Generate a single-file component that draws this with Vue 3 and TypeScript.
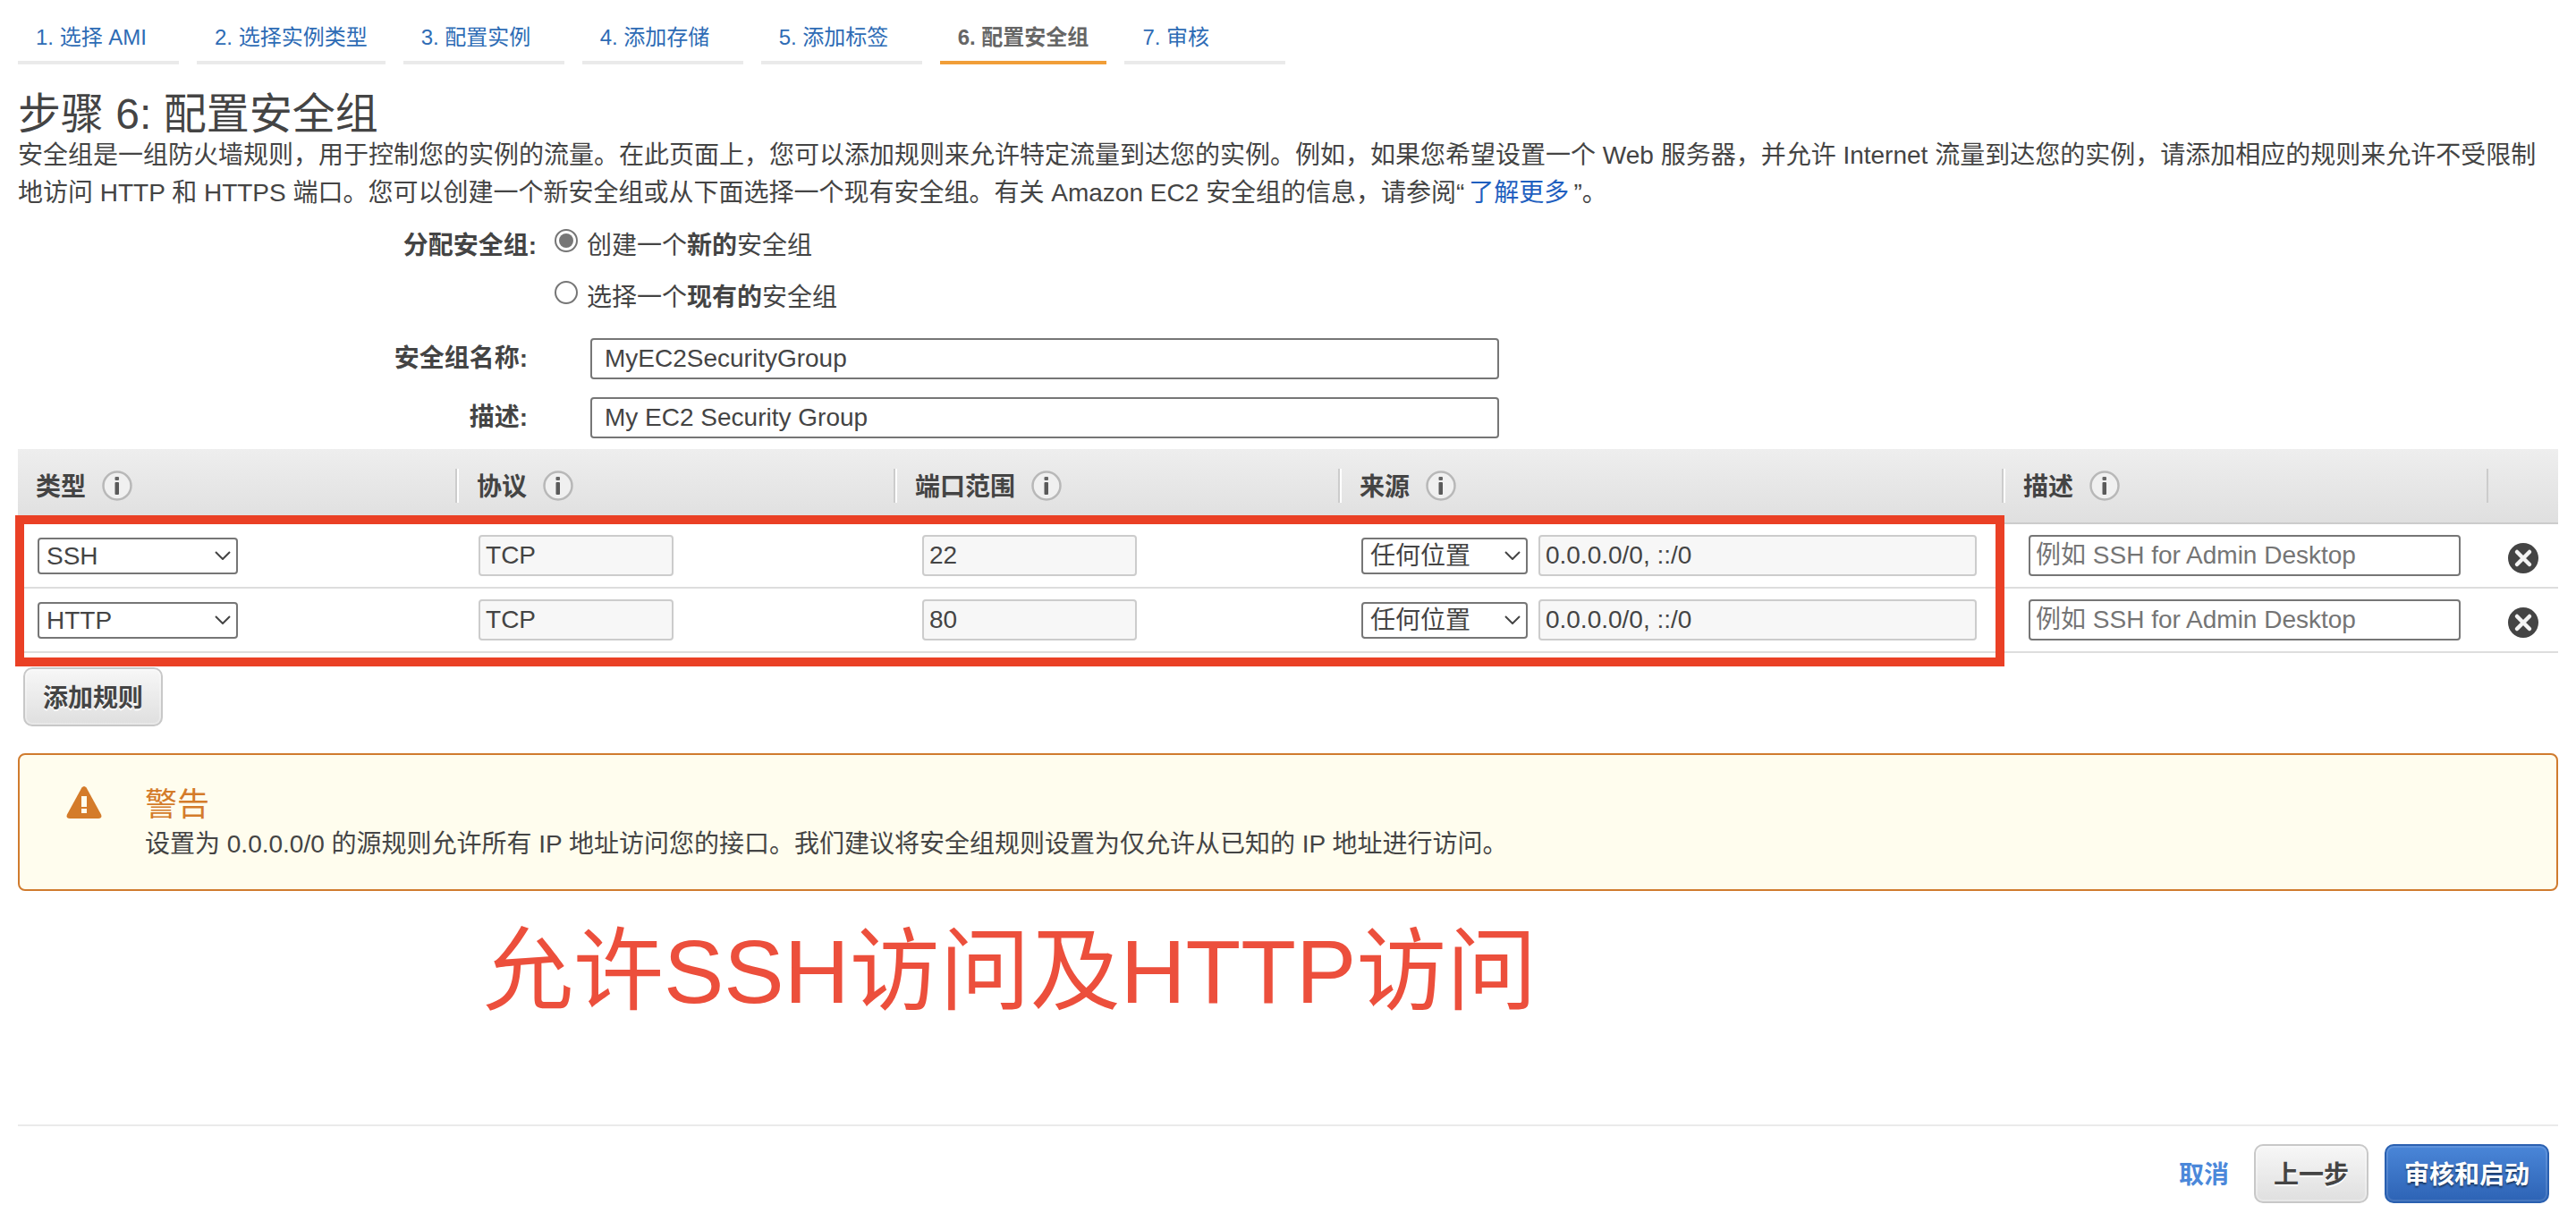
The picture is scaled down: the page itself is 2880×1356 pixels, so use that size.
<script setup lang="ts">
import { ref } from 'vue'

interface Step {
  label: string
  active?: boolean
}

interface Rule {
  type: string
  protocol: string
  port: string
  source: string
  cidr: string
  description: string
}

const steps: Step[] = [
  { label: '1. 选择 AMI' },
  { label: '2. 选择实例类型' },
  { label: '3. 配置实例' },
  { label: '4. 添加存储' },
  { label: '5. 添加标签' },
  { label: '6. 配置安全组', active: true },
  { label: '7. 审核' },
]

const columns: string[] = ['类型', '协议', '端口范围', '来源', '描述', '']

const assignMode = ref<'new' | 'existing'>('new')
const groupName = ref('MyEC2SecurityGroup')
const groupDescription = ref('My EC2 Security Group')

const rules = ref<Rule[]>([
  { type: 'SSH', protocol: 'TCP', port: '22', source: '任何位置', cidr: '0.0.0.0/0, ::/0', description: '' },
  { type: 'HTTP', protocol: 'TCP', port: '80', source: '任何位置', cidr: '0.0.0.0/0, ::/0', description: '' },
])

function addRule(): void {
  rules.value.push({
    type: 'SSH',
    protocol: 'TCP',
    port: '22',
    source: '任何位置',
    cidr: '0.0.0.0/0, ::/0',
    description: '',
  })
}

function removeRule(index: number): void {
  rules.value.splice(index, 1)
}
</script>

<template>
  <main class="page">
    <nav class="steps">
      <a
        v-for="step in steps"
        :key="step.label"
        href="#"
        class="step"
        :class="{ active: step.active }"
      >{{ step.label }}</a>
    </nav>

    <h1>步骤 6: 配置安全组</h1>
    <p class="intro">
      安全组是一组防火墙规则，用于控制您的实例的流量。在此页面上，您可以添加规则来允许特定流量到达您的实例。例如，如果您希望设置一个 Web 服务器，并允许 Internet 流量到达您的实例，请添加相应的规则来允许不受限制地访问 HTTP 和 HTTPS 端口。您可以创建一个新安全组或从下面选择一个现有安全组。有关 Amazon EC2 安全组的信息，请参阅“<a href="#">了解更多</a>”。
    </p>

    <div class="assign" role="radiogroup" aria-labelledby="assign-label">
      <span id="assign-label" class="assign-label">分配安全组:</span>
      <div class="choices">
        <label class="choice">
          <input v-model="assignMode" type="radio" name="assign" value="new" />
          <span>创建一个<b>新的</b>安全组</span>
        </label>
        <label class="choice">
          <input v-model="assignMode" type="radio" name="assign" value="existing" />
          <span>选择一个<b>现有的</b>安全组</span>
        </label>
      </div>
    </div>

    <div class="fields">
      <label for="group-name">安全组名称:</label>
      <input id="group-name" v-model="groupName" class="box roomy" type="text" />
      <label for="group-desc">描述:</label>
      <input id="group-desc" v-model="groupDescription" class="box roomy" type="text" />
    </div>

    <div class="rules">
      <table>
        <colgroup>
          <col class="c-type" />
          <col class="c-protocol" />
          <col class="c-port" />
          <col class="c-source" />
          <col class="c-desc" />
          <col />
        </colgroup>
        <thead>
          <tr>
            <th v-for="column in columns" :key="column" scope="col">
              <div class="head">
                {{ column }}
                <svg v-if="column" class="info" viewBox="0 0 34 34" aria-hidden="true">
                  <circle cx="17" cy="17" r="15.5" fill="#f0f0f0" stroke="#b8b8b8" stroke-width="2.5" />
                  <rect x="14.5" y="7" width="4.500" height="4" rx="1" fill="#666" />
                  <rect x="14.5" y="13" width="4.500" height="14" rx="1" fill="#5a5a5a" />
                </svg>
              </div>
            </th>
          </tr>
        </thead>
        <tbody>
          <tr v-for="(rule, index) in rules" :key="index">
            <td class="t-type">
              <span class="picker">
                <select v-model="rule.type" aria-label="类型">
                  <option>SSH</option>
                  <option>HTTP</option>
                </select>
                <svg viewBox="0 0 18 10" aria-hidden="true"><path d="M1 1l8 8 8-8" /></svg>
              </span>
            </td>
            <td class="t-protocol">
              <input class="box" type="text" :value="rule.protocol" disabled aria-label="协议" />
            </td>
            <td class="t-port">
              <input class="box" type="text" :value="rule.port" disabled aria-label="端口范围" />
            </td>
            <td class="t-source">
              <div class="source">
                <span class="picker">
                  <select v-model="rule.source" aria-label="来源">
                    <option>任何位置</option>
                    <option>自定义</option>
                  </select>
                  <svg viewBox="0 0 18 10" aria-hidden="true"><path d="M1 1l8 8 8-8" /></svg>
                </span>
                <input class="box" type="text" :value="rule.cidr" disabled aria-label="来源地址" />
              </div>
            </td>
            <td class="t-desc">
              <input
                v-model="rule.description"
                class="box"
                type="text"
                placeholder="例如 SSH for Admin Desktop"
                aria-label="描述"
              />
            </td>
            <td class="t-remove">
              <button class="remove" type="button" aria-label="删除规则" @click="removeRule(index)">
                <svg viewBox="0 0 34 34" aria-hidden="true">
                  <circle cx="17" cy="17" r="17" fill="#444" />
                  <path d="M10 10l14 14M24 10L10 24" fill="none" stroke="#f4f4f4" stroke-width="4.500" stroke-linecap="round" />
                </svg>
              </button>
            </td>
          </tr>
        </tbody>
      </table>
      <div class="marker" aria-hidden="true"></div>
    </div>

    <button class="btn add" type="button" @click="addRule">添加规则</button>

    <section class="warning">
      <svg viewBox="0 0 40 36" aria-hidden="true">
        <path d="M17.4 1.6Q20-1.6 22.6 1.6L39 31.5Q40.600 36 36 36H4Q-.6 36 1 31.500Z" fill="#d47b2a" />
        <rect x="17" y="11" width="6" height="12" fill="#fffdee" />
        <rect x="17" y="25" width="6" height="5" fill="#fffdee" />
      </svg>
      <div>
        <h2>警告</h2>
        <p>设置为 0.0.0.0/0 的源规则允许所有 IP 地址访问您的接口。我们建议将安全组规则设置为仅允许从已知的 IP 地址进行访问。</p>
      </div>
    </section>

    <p class="note">允许SSH访问及HTTP访问</p>

    <footer>
      <a href="#" class="cancel">取消</a>
      <button class="btn" type="button">上一步</button>
      <button class="btn primary" type="button">审核和启动</button>
    </footer>
  </main>
</template>

<style>
body {
  margin: 0;
  background: #fff;
}
</style>

<style scoped>
* {
  box-sizing: border-box;
}

.page {
  display: flex;
  flex-direction: column;
  min-height: 100vh;
  padding: 0 20px;
  color: #444;
  font-family: "Liberation Sans", "Noto Sans CJK SC", sans-serif;
  font-size: 28px;
  line-height: 42px;
}

input,
select,
button {
  margin: 0;
  color: inherit;
  font: inherit;
}

a {
  color: #1f5fbf;
  text-decoration: none;
}

.steps {
  display: flex;
  gap: 20px;
  font-size: 24px;
  line-height: 28px;
}

.step {
  min-width: 180px;
  padding: 28px 20px 12px;
  border-bottom: 4px solid #eaeaea;
  color: #2e6cb5;
  white-space: nowrap;
}

.step.active {
  border-bottom-color: #f19e38;
  color: #666;
  font-weight: bold;
}

h1 {
  margin: 31px 0 0;
  font-size: 48px;
  font-weight: normal;
  line-height: 50px;
}

.intro {
  margin: 0;
}

.intro a {
  padding: 0 5px;
}

.assign {
  display: flex;
  gap: 20px;
  margin-top: 9px;
  line-height: 58px;
}

.assign-label {
  width: 580px;
  font-weight: bold;
  text-align: right;
}

.choice {
  display: flex;
  align-items: center;
  gap: 10px;
}

.choice input {
  width: 26px;
  height: 26px;
  margin-bottom: 12px;
  padding: 3px;
  border: 2px solid #767676;
  border-radius: 50%;
  background: #fff;
  appearance: none;
}

.choice input:checked {
  background: #767676 content-box;
}

.fields {
  display: grid;
  grid-template-columns: 570px minmax(0, 1016px);
  gap: 20px 70px;
  margin-top: 16px;
}

.fields label {
  padding-top: 2px;
  font-weight: bold;
  text-align: right;
}

.box {
  display: block;
  width: 100%;
  height: 46px;
  padding: 0 6px;
  border: 2px solid #767676;
  border-radius: 4px;
  background: #fff;
}

.box.roomy {
  padding: 0 14px;
}

.box:disabled {
  border-color: #ccc;
  background: #f7f7f7;
}

.box::placeholder {
  color: #757575;
  opacity: 1;
}

.rules {
  position: relative;
  margin-top: 12px;
}

table {
  width: 100%;
  border-spacing: 0;
  table-layout: fixed;
}

.c-type {
  width: 17.22%;
}

.c-protocol {
  width: 17.25%;
}

.c-port {
  width: 17.5%;
}

.c-source {
  width: 26.13%;
}

.c-desc {
  width: 19.08%;
}

thead tr {
  background: linear-gradient(#eee, #dfdfdf);
}

th {
  height: 84px;
  padding: 0;
  border-bottom: 2px solid #ccc;
  text-align: left;
}

.head {
  display: flex;
  align-items: center;
  gap: 18px;
  height: 38px;
  padding: 4px 0 0 22px;
  border-left: 2px solid #ccc;
  box-shadow: inset 2px 0 #fff;
}

th:first-child .head {
  padding-left: 20px;
  border-left: 0;
  box-shadow: none;
}

th:last-child .head {
  box-shadow: none;
}

.info {
  flex: none;
  width: 34px;
  height: 34px;
  margin-bottom: 4px;
}

td {
  height: 72px;
  padding: 0;
  border-bottom: 2px solid #ddd;
}

.t-type {
  padding-left: 22px;
}

.t-type .picker {
  width: 224px;
}

.t-protocol {
  padding-left: 26px;
}

.t-protocol .box {
  width: 218px;
}

.t-port {
  padding-left: 32px;
}

.t-port .box {
  width: 240px;
}

.t-source {
  padding: 0 28px 0 26px;
}

.t-source .picker {
  width: 186px;
  flex: none;
}

.t-desc {
  padding: 0 29px 0 30px;
}

.t-remove {
  padding-left: 24px;
}

.source {
  display: flex;
  align-items: center;
  gap: 12px;
}

.picker {
  display: grid;
  align-items: center;
}

.picker select,
.picker svg {
  grid-area: 1 / 1;
}

.picker select {
  width: 100%;
  height: 41px;
  padding: 0 34px 0 8px;
  border: 2px solid #767676;
  border-radius: 4px;
  background: #fff;
  line-height: 37px;
  appearance: none;
}

.picker svg {
  justify-self: end;
  width: 18px;
  height: 10px;
  margin-right: 8px;
  fill: none;
  stroke: #444;
  stroke-width: 2;
  pointer-events: none;
}

.remove {
  display: block;
  width: 34px;
  height: 34px;
  margin-top: 6px;
  padding: 0;
  border: 0;
  background: none;
}

.remove svg {
  display: block;
}

/* Frame that highlights the rule rows, laid over the table */
.marker {
  position: absolute;
  top: 74px;
  right: 619px;
  bottom: -15px;
  left: -3px;
  border: 10px solid #ea4025;
  pointer-events: none;
}

.btn {
  height: 66px;
  padding: 3px 20px 0;
  border: 2px solid #c8c8c8;
  border-radius: 10px;
  background: linear-gradient(#f7f7f7, #dfdfdf);
  box-shadow: inset 0 0 0 2px rgba(255, 255, 255, 0.3);
  font-weight: bold;
  text-shadow: 0 2px #fff;
  white-space: nowrap;
}

.btn.add {
  align-self: flex-start;
  margin: 16px 0 0 6px;
}

.btn.primary {
  border-color: #2a60b0;
  background: linear-gradient(#4a86d8, #2d63b5);
  box-shadow: inset 0 0 0 2px rgba(255, 255, 255, 0.12);
  color: #fff;
  text-shadow: 0 2px 2px rgba(0, 0, 0, 0.5);
}

.warning {
  display: flex;
  gap: 48px;
  margin-top: 30px;
  padding: 32px 52px 29px;
  border: 2px solid #d07b2e;
  border-radius: 8px;
  background: #fffdee;
}

.warning svg {
  flex: none;
  width: 40px;
  height: 36px;
  margin-top: 3px;
}

.warning h2 {
  margin: 0;
  color: #d47b2a;
  font-size: 36px;
  font-weight: normal;
  line-height: 47px;
}

.warning p {
  margin: 0;
}

.note {
  margin: 30px 0 0 520px;
  color: #ec4f3c;
  font-size: 101px;
  line-height: 120px;
}

footer {
  display: flex;
  align-items: center;
  justify-content: flex-end;
  gap: 18px;
  margin-top: auto;
  padding: 20px 10px 11px;
  border-top: 2px solid #eaeaea;
}

.cancel {
  margin-right: 10px;
  padding-top: 3px;
  color: #4b88da;
  font-weight: bold;
}
</style>
